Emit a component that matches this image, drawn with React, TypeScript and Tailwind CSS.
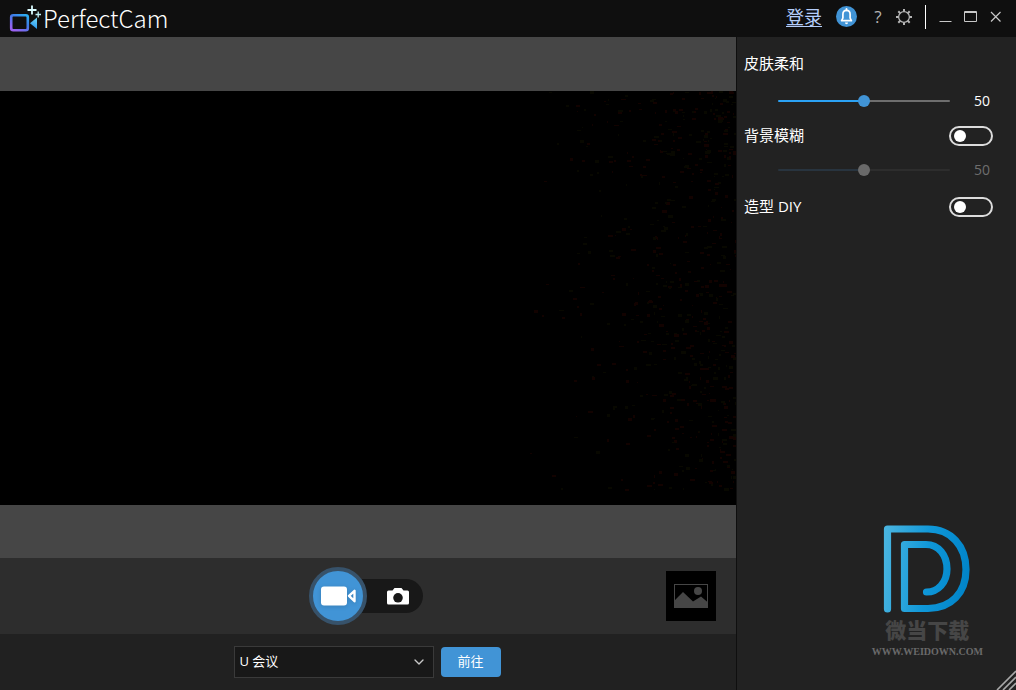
import { useState } from "react";
import { ChevronDown } from "lucide-react";
import clsx from "clsx";

// fixed seed, so the sensor noise is the same on every render
function makeNoise(count: number) {
    let seed = 7;
    const next = () => {
        seed = (seed * 16807) % 2147483647;
        return seed / 2147483647;
    };
    return Array.from({ length: count }, () => ({
        x: Math.round(736 - 210 * (1 - Math.pow(next(), 0.4))),
        y: Math.round(400 * Math.pow(next(), 1.2)),
        w: 1 + Math.round(next() * 4),
        h: 1 + Math.round(next() * 2),
        fill: next() > 0.45 ? "#120200" : "#080800",
    }));
}

const noise = makeNoise(620);

function Logo() {
    return (
        <svg width="32" height="28" viewBox="0 0 32 28" fill="none" aria-hidden="true">
            <defs>
                <linearGradient id="body" x1="18" y1="8" x2="6" y2="26" gradientUnits="userSpaceOnUse">
                    <stop stopColor="#25c0f5" />
                    <stop offset="0.5" stopColor="#3f7be8" />
                    <stop offset="1" stopColor="#9a62f0" />
                </linearGradient>
                <linearGradient id="lens" x1="27" y1="12" x2="22" y2="22" gradientUnits="userSpaceOnUse">
                    <stop stopColor="#7de0f6" />
                    <stop offset="1" stopColor="#2f9df0" />
                </linearGradient>
            </defs>
            <rect x="2.2" y="11.2" width="16.600" height="15" rx="2" stroke="url(#body)" strokeWidth="2.600" />
            <path d="M28 13.500v11.500L21 19.200z" fill="url(#lens)" />
            <path d="M23 1.500v9M18.500 6h9" stroke="#d9fbff" strokeWidth="1.800" />
            <path d="M29.200 7.500v6M26.500 10.500h5.500" stroke="#bdeef5" strokeWidth="1.300" />
        </svg>
    );
}

function BellIcon() {
    return (
        <svg width="21" height="21" viewBox="0 0 21 21" fill="none" aria-hidden="true">
            <circle cx="10.5" cy="10.5" r="10.5" fill="#4194d6" />
            <path
                d="M10.500 4.300C8.200 4.300 6.900 6 6.900 8.200V12L5.600 14.700H15.400L14.100 12V8.200C14.100 6 12.800 4.300 10.500 4.300z"
                stroke="#fff"
                strokeWidth="1.700"
                strokeLinejoin="round"
            />
            <path d="M10.500 2.800v1.500" stroke="#fff" strokeWidth="1.800" strokeLinecap="round" />
            <path d="M9 16.600h3c0 1-.7 1.600-1.500 1.600S9 17.600 9 16.600z" fill="#fff" />
        </svg>
    );
}

function GearIcon() {
    return (
        <svg width="18" height="18" viewBox="0 0 18 18" fill="none" stroke="#b4b4b4" aria-hidden="true">
            <circle cx="9" cy="9" r="5.4" strokeWidth="1.3" />
            <path d="M9 1v2.600M9 14.400V17M1 9h2.600M14.400 9H17M3.300 3.300l1.900 1.900M12.800 12.800l1.900 1.900M14.700 3.300l-1.900 1.900M5.200 12.800l-1.900 1.900" strokeWidth="2" />
        </svg>
    );
}

function Header() {
    return (
        <header className="flex h-[37px] shrink-0 items-center justify-between bg-[#0f0f0f] pr-[14px] pl-[9px]">
            <div className="flex items-center gap-[2px] pb-[2px]">
                <Logo />
                <h1 className="text-2xl leading-8 font-light text-white font-['Noto_Sans_CJK_SC',sans-serif]">PerfectCam</h1>
            </div>
            <div className="flex items-center pb-1">
                <a href="#login" className="text-lg leading-6 text-[#b4cdfa] underline underline-offset-2">登录</a>
                <button aria-label="通知" className="ml-[14px]">
                    <BellIcon />
                </button>
                <button className="ml-[15px] w-3 font-['Open_Sans'] text-[17px] leading-6 text-[#b4b4b4]">?</button>
                <button aria-label="设置" className="ml-[11px]">
                    <GearIcon />
                </button>
                <div className="ml-3 h-6 w-px bg-white" />
                <button aria-label="最小化" className="ml-[13px]">
                    <svg width="13" height="13" viewBox="0 0 13 13" stroke="#c8c8c8" aria-hidden="true">
                        <path d="M.5 11.500h12" />
                    </svg>
                </button>
                <button aria-label="最大化" className="ml-3">
                    <svg width="13" height="13" viewBox="0 0 13 13" fill="none" stroke="#c8c8c8" aria-hidden="true">
                        <path d="M.5 1.500h12v10H.5zM.5 2.500h12" />
                    </svg>
                </button>
                <button aria-label="关闭" className="ml-3">
                    <svg width="13" height="13" viewBox="0 0 13 13" fill="none" stroke="#c8c8c8" strokeWidth="1.2" aria-hidden="true">
                        <path d="M2 2l9.500 9.500M11.500 2L2 11.500" />
                    </svg>
                </button>
            </div>
        </header>
    );
}

function Preview() {
    return (
        <div className="flex min-h-0 flex-1 items-center justify-center bg-[#464646]">
            <div className="aspect-video w-full bg-black">
                <svg viewBox="0 0 736 414" className="h-full w-full" aria-hidden="true">
                    {noise.map((n, i) => (
                        <rect key={i} x={n.x} y={n.y} width={n.w} height={n.h} fill={n.fill} />
                    ))}
                </svg>
            </div>
        </div>
    );
}

function Controls() {
    return (
        <div className="grid h-[76px] shrink-0 grid-cols-[1fr_auto_1fr] items-center bg-[#2d2d2d] pr-5 pl-4">
            <div className="col-start-2 flex items-center">
                <button aria-label="录像" className="z-10 flex size-[58px] items-center justify-center rounded-full border-4 border-[#37526a] bg-[#4194d6]">
                    <svg width="36" height="22" viewBox="0 0 36 22" className="drop-shadow-sm" aria-hidden="true">
                        <rect x="1" y="1.500" width="26" height="19" rx="3" fill="#fff" />
                        <path d="M29 10.800L34.500 5.800v10.400z" fill="none" stroke="#fff" strokeWidth="2.400" strokeLinejoin="round" />
                    </svg>
                </button>
                <button aria-label="拍照" className="-ml-7 flex h-[34px] w-21 items-center justify-end rounded-r-full bg-[#181818] pr-[14px]">
                    <svg width="22" height="18" viewBox="0 0 22 18" aria-hidden="true">
                        <path d="M5.500 3.500L7.500 1h7L16.500 3.500h4A1.500 1.500 0 0 1 22 5v11a1.500 1.500 0 0 1-1.500 1.500h-19A1.500 1.500 0 0 1 0 16V5a1.500 1.500 0 0 1 1.500-1.500z" fill="#fff" />
                        <circle cx="11" cy="10.800" r="4.800" fill="#181818" />
                    </svg>
                </button>
            </div>
            <button aria-label="相册" className="flex size-[50px] items-center justify-center justify-self-end bg-black">
                <svg width="34" height="24" viewBox="0 0 34 24" aria-hidden="true">
                    <rect x=".5" y=".5" width="33" height="23" fill="none" stroke="#464646" />
                    <circle cx="24" cy="7" r="4" fill="#464646" />
                    <path d="M0 24v-7l9-9 10 9.500 8-5 7 6V24z" fill="#464646" />
                </svg>
            </button>
        </div>
    );
}

function Destination() {
    return (
        <div className="flex h-14 shrink-0 items-center justify-center gap-[7px] bg-[#212121] pr-[2px]">
            <div className="relative">
                <select aria-label="会议软件" className="h-8 w-50 appearance-none border border-[#3a3a3a] bg-[#181818] px-[5px] text-[13px] text-white">
                    <option>U 会议</option>
                </select>
                <ChevronDown size={16} strokeWidth={2} color="#c8c8c8" className="pointer-events-none absolute top-2 right-[7px]" />
            </div>
            <button className="h-[30px] w-15 rounded bg-[#4194d6] text-[13px] text-white">前往</button>
        </div>
    );
}

type SliderProps = {
    label: string;
    disabled?: boolean;
};

function Slider({ label, disabled }: SliderProps) {
    const [value, setValue] = useState(50);
    const from = disabled ? "#28343f" : "#2ba2f5";
    const to = disabled ? "#2d2d2d" : "#6e6e6e";

    return (
        <div className="flex h-5 items-center pr-[26px] pl-[41px]">
            <input
                type="range"
                aria-label={label}
                value={value}
                disabled={disabled}
                onChange={(e) => setValue(Number(e.target.value))}
                style={{ backgroundImage: `linear-gradient(to right, ${from} ${value}%, ${to} ${value}%)` }}
                className={clsx(
                    "h-[2px] min-w-0 flex-1 appearance-none rounded-full [&::-webkit-slider-thumb]:size-3 [&::-webkit-slider-thumb]:appearance-none [&::-webkit-slider-thumb]:rounded-full",
                    disabled ? "[&::-webkit-slider-thumb]:bg-[#6a6a6a]" : "[&::-webkit-slider-thumb]:bg-[#4194d6]"
                )}
            />
            <span className={clsx("w-10 text-right text-sm", disabled ? "text-[#6e6e6e]" : "text-white")}>{value}</span>
        </div>
    );
}

function Toggle({ label, id }: { label: string; id: string }) {
    return (
        <div className="flex h-6 items-center justify-between pr-[23px] pl-[7px]">
            <label htmlFor={id} className="pb-[2px] text-[15px] text-white">{label}</label>
            <input
                id={id}
                type="checkbox"
                role="switch"
                className="flex h-5 w-11 appearance-none items-center rounded-full border-2 border-[#dcdcdc] px-[3px] before:size-3 before:rounded-full before:bg-white checked:justify-end checked:bg-[#4194d6]"
            />
        </div>
    );
}

function Watermark() {
    return (
        <div className="mt-auto mr-[33px] mb-8 flex flex-col items-center self-end">
            <svg width="88" height="90" viewBox="0 0 88 90" fill="none" aria-hidden="true">
                <defs>
                    <linearGradient id="mark" x1="0" y1="40" x2="88" y2="50" gradientUnits="userSpaceOnUse">
                        <stop stopColor="#48b4e0" />
                        <stop offset="0.500" stopColor="#0f97d8" />
                        <stop offset="1" stopColor="#0083c8" />
                    </linearGradient>
                </defs>
                <path
                    d="M4.500 85V5H45C68 5 83 22 83 45.500S68 84.500 45 84.500H21.500V20.500H43C55.500 20.500 64 31 64 45C64 58.500 55 68 43.500 68"
                    stroke="url(#mark)"
                    strokeWidth="7.200"
                    strokeLinecap="round"
                    strokeLinejoin="round"
                />
            </svg>
            <p className="text-[21px] leading-8 font-black text-[#464646]">微当下载</p>
            <p className="font-['Liberation_Serif'] text-[10px] leading-3 font-bold text-[#6a6a6a]">WWW.WEIDOWN.COM</p>
        </div>
    );
}

function Sidebar() {
    return (
        <aside className="relative flex w-[280px] shrink-0 flex-col border-l border-[#0f0f0f] bg-[#222222] pt-[14px]">
            <h2 className="h-6 pl-[7px] text-[15px] leading-6 text-white">皮肤柔和</h2>
            <div className="mt-4">
                <Slider label="皮肤柔和" />
            </div>
            <div className="mt-[13px]">
                <Toggle id="blur" label="背景模糊" />
            </div>
            <div className="mt-3">
                <Slider label="背景模糊强度" disabled />
            </div>
            <div className="mt-[15px]">
                <Toggle id="diy" label="造型 DIY" />
            </div>
            <Watermark />
            <svg width="20" height="20" viewBox="0 0 20 20" stroke="#a8a8a8" strokeWidth="1.600" className="absolute right-0 bottom-0" aria-hidden="true">
                <path d="M1 20L20 1M7 20L20 7M13 20l7-7" />
            </svg>
        </aside>
    );
}

export default function App() {
    return (
        <div className="flex h-screen flex-col bg-[#222222] font-['Open_Sans','Noto_Sans_CJK_SC',sans-serif]">
            <Header />
            <div className="flex min-h-0 flex-1">
                <main className="flex min-w-0 flex-1 flex-col">
                    <Preview />
                    <Controls />
                    <Destination />
                </main>
                <Sidebar />
            </div>
        </div>
    );
}
